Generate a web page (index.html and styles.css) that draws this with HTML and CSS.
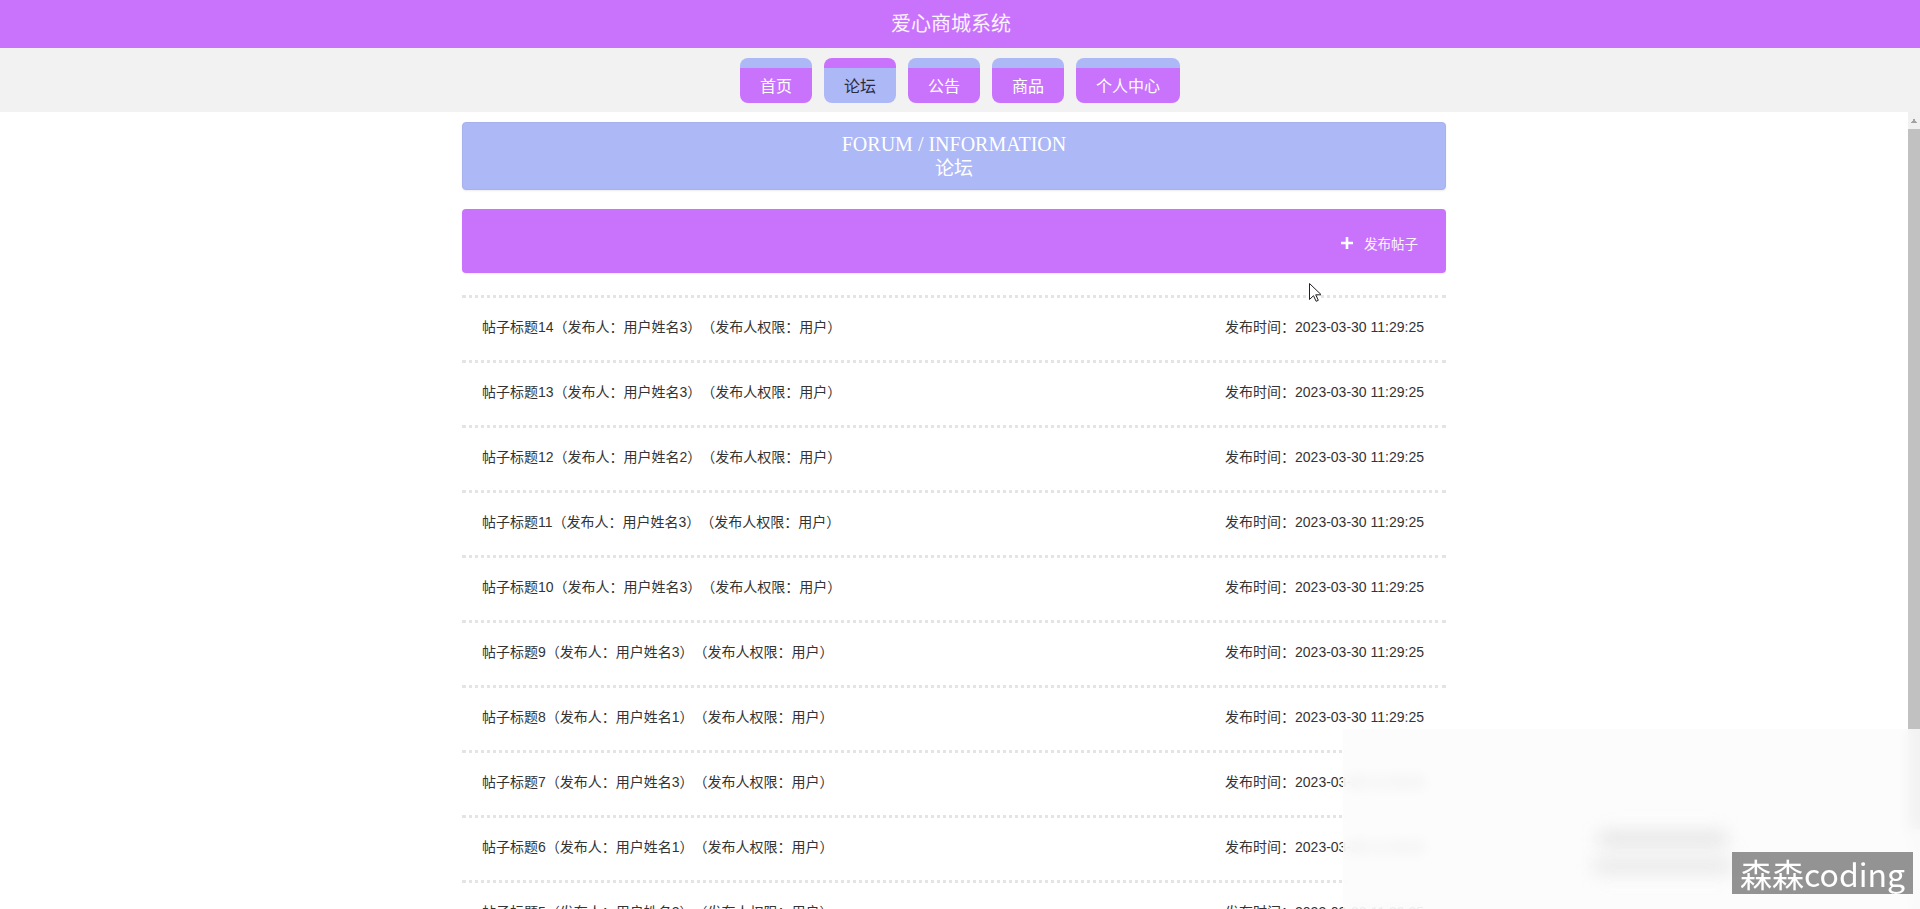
FILE: index.html
```html
<!DOCTYPE html>
<html lang="zh-CN">
<head>
<meta charset="utf-8">
<title>爱心商城系统</title>
<link rel="stylesheet" href="styles.css">
</head>
<body>
<header class="topbar">爱心商城系统</header>
<nav class="menu">
  <a class="menu-item">首页</a>
  <a class="menu-item active">论坛</a>
  <a class="menu-item">公告</a>
  <a class="menu-item">商品</a>
  <a class="menu-item wide">个人中心</a>
</nav>
<div class="viewport">
  <main class="main">
    <div class="container">
      <section class="banner">
        <div class="banner-en">FORUM / INFORMATION</div>
        <div class="banner-cn">论坛</div>
      </section>
      <section class="toolbar">
        <button class="publish">
          <svg class="plus" viewBox="0 0 14 14" width="14" height="14"><path d="M7 1v12M1 7h12" stroke="#fff" stroke-width="2.6" fill="none"/></svg>
          <span>发布帖子</span>
        </button>
      </section>
      <ul class="posts">
        <li class="post"><span class="post-title">帖子标题14（发布人：用户姓名3）（发布人权限：用户）</span><span class="post-time">发布时间：2023-03-30 11:29:25</span></li>
        <li class="post"><span class="post-title">帖子标题13（发布人：用户姓名3）（发布人权限：用户）</span><span class="post-time">发布时间：2023-03-30 11:29:25</span></li>
        <li class="post"><span class="post-title">帖子标题12（发布人：用户姓名2）（发布人权限：用户）</span><span class="post-time">发布时间：2023-03-30 11:29:25</span></li>
        <li class="post"><span class="post-title">帖子标题11（发布人：用户姓名3）（发布人权限：用户）</span><span class="post-time">发布时间：2023-03-30 11:29:25</span></li>
        <li class="post"><span class="post-title">帖子标题10（发布人：用户姓名3）（发布人权限：用户）</span><span class="post-time">发布时间：2023-03-30 11:29:25</span></li>
        <li class="post"><span class="post-title">帖子标题9（发布人：用户姓名3）（发布人权限：用户）</span><span class="post-time">发布时间：2023-03-30 11:29:25</span></li>
        <li class="post"><span class="post-title">帖子标题8（发布人：用户姓名1）（发布人权限：用户）</span><span class="post-time">发布时间：2023-03-30 11:29:25</span></li>
        <li class="post"><span class="post-title">帖子标题7（发布人：用户姓名3）（发布人权限：用户）</span><span class="post-time">发布时间：2023-03-30 11:29:25</span></li>
        <li class="post"><span class="post-title">帖子标题6（发布人：用户姓名1）（发布人权限：用户）</span><span class="post-time">发布时间：2023-03-30 11:29:25</span></li>
        <li class="post"><span class="post-title">帖子标题5（发布人：用户姓名2）（发布人权限：用户）</span><span class="post-time">发布时间：2023-03-30 11:29:25</span></li>
      </ul>
    </div>
  </main>
  <div class="scrollbar">
    <div class="scroll-arrow"></div>
    <div class="scroll-thumb"></div>
  </div>
</div>
<svg class="cursor" viewBox="0 0 12 19" width="12" height="19"><path d="M0.5 0.5v16l4-3.8 2.6 5.6 2.2-1-2.6-5.5h5.6z" fill="#fff" stroke="#222" stroke-width="1"/></svg>
<div class="toast">
  <div class="blob blob-a"></div>
  <div class="blob blob-b"></div>
</div>
<div class="watermark">森森coding</div>
</body>
</html>
```

FILE: styles.css
```css
html, body {
  margin: 0;
  padding: 0;
  height: 909px;
  overflow: hidden;
  background: #fff;
  font-family: "Liberation Sans", "Noto Sans CJK SC", sans-serif;
  text-spacing-trim: space-all;
}

.topbar {
  height: 48px;
  line-height: 48px;
  background: #c973fc;
  color: #fbf4ff;
  font-size: 20px;
  text-align: center;
  padding-right: 18px;
}

.menu {
  height: 64px;
  background: #f2f2f2;
  display: flex;
  justify-content: center;
  align-items: flex-start;
  gap: 12px;
  padding-top: 10px;
  box-sizing: border-box;
}

.menu-item {
  width: 72px;
  height: 45px;
  box-sizing: border-box;
  border-top: 10px solid #adb8f6;
  border-radius: 8px;
  background: #c973fc;
  color: #fff;
  font-size: 16px;
  display: flex;
  align-items: center;
  justify-content: center;
  padding-bottom: 2px;
  cursor: pointer;
}

.menu-item.active {
  border-top-color: #c973fc;
  background: #adb8f6;
  color: #2b2b3a;
}

.menu-item.wide {
  width: 104px;
}

.viewport {
  height: 797px;
  display: flex;
}

.main {
  flex: 1;
  overflow: hidden;
  background: #fff;
}

.scrollbar {
  width: 12px;
  display: flex;
  flex-direction: column;
  background: #f1f1f1;
}

.scroll-arrow {
  height: 17px;
  background: conic-gradient(from 150deg at 50% 0, #a3a3a3 60deg, transparent 0) center / 8px 5px no-repeat;
}

.scroll-thumb {
  height: 700px;
  background: #c1c1c1;
}

.container {
  width: 984px;
  margin: 0 auto;
  padding: 10px 0 80px;
}

.banner {
  height: 68px;
  box-sizing: border-box;
  background: #adb8f6;
  border: 1px solid #a7b1ee;
  border-radius: 4px;
  box-shadow: 0 1px 2px rgba(0, 0, 0, 0.08);
  color: #fff;
  font-family: "Liberation Serif", "Noto Sans CJK SC", serif;
  font-size: 20px;
  line-height: 23px;
  text-align: center;
  display: flex;
  flex-direction: column;
  justify-content: center;
}

.banner-cn {
  font-size: 19px;
  margin-top: 1px;
}

.toolbar {
  margin-top: 19px;
  height: 64px;
  box-sizing: border-box;
  background: #c973fc;
  border-radius: 4px;
  box-shadow: 0 1px 2px rgba(0, 0, 0, 0.06);
  display: flex;
  justify-content: flex-end;
  align-items: center;
  padding: 3px 28px 0 0;
}

.publish {
  background: transparent;
  border: 0;
  padding: 0;
  color: #fdf3ff;
  font-family: "Liberation Sans", "Noto Sans CJK SC", sans-serif;
  font-size: 13.5px;
  display: flex;
  align-items: center;
  gap: 10px;
  cursor: pointer;
}

.plus {
  display: block;
}

.posts {
  list-style: none;
  margin: 22px 0 0;
  padding: 0;
}

.post {
  height: 65px;
  box-sizing: border-box;
  border-top: 3px dotted #e4e4e4;
  display: flex;
  justify-content: space-between;
  align-items: center;
  padding: 0 22px 6px 20px;
  font-size: 14px;
  color: #333;
}

.cursor {
  position: absolute;
  left: 1309px;
  top: 283px;
}

.toast {
  position: absolute;
  left: 1343px;
  top: 729px;
  width: 577px;
  height: 180px;
  background: rgba(252, 252, 252, 0.84);
  backdrop-filter: blur(7px);
  overflow: hidden;
}

.blob {
  position: absolute;
  background: #e2e2e2;
  filter: blur(9px);
  border-radius: 6px;
}

.blob-a {
  left: 255px;
  top: 103px;
  width: 130px;
  height: 14px;
}

.blob-b {
  left: 250px;
  top: 130px;
  width: 140px;
  height: 14px;
  background: #e6e6e6;
}

.watermark {
  position: absolute;
  left: 1732px;
  top: 852px;
  height: 42px;
  padding: 0 8px;
  background: rgba(128, 128, 128, 0.85);
  color: #fff;
  font-family: "Noto Sans CJK SC", sans-serif;
  font-size: 32px;
  line-height: 42px;
}
```
